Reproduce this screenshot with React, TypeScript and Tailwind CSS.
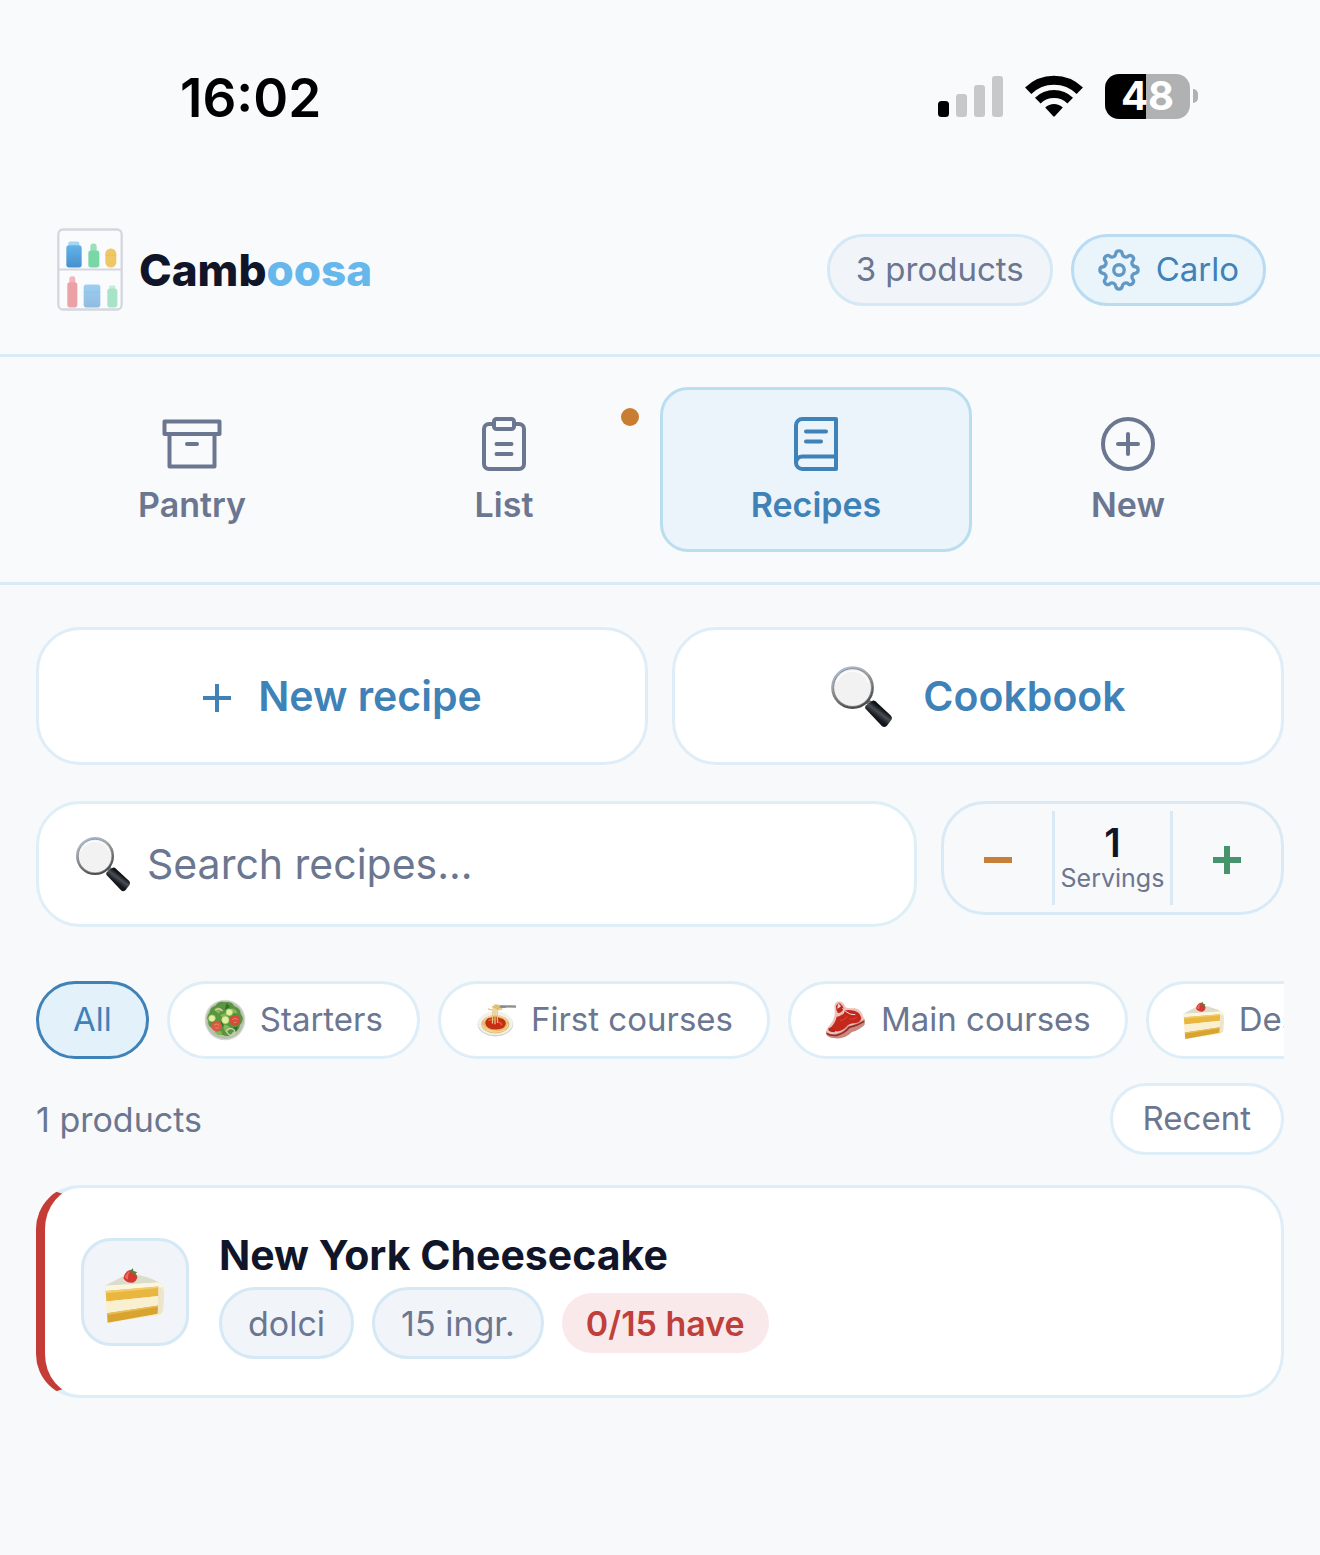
import React, { useState } from "react";

interface IconProps {
  className?: string;
}

interface Tab {
  id: string;
  label: string;
  icon: React.ReactNode;
  alert?: boolean;
}

interface Category {
  id: string;
  label: string;
  icon?: React.ReactNode;
}

const LineIcon: React.FC<{ children: React.ReactNode }> = ({ children }) => (
  <svg
    viewBox="0 0 24 24"
    className="size-[60px]"
    fill="none"
    stroke="currentColor"
    strokeWidth="1.6"
    strokeLinecap="round"
    strokeLinejoin="round"
    aria-hidden="true"
  >
    {children}
  </svg>
);

const GearIcon = () => (
  <svg
    viewBox="0 0 24 24"
    className="size-[42px] opacity-80"
    fill="none"
    stroke="currentColor"
    strokeWidth="1.9"
    strokeLinejoin="round"
    aria-hidden="true"
  >
    <circle cx="12" cy="12" r="3" />
    <path d="M10.15 2.68a1.87 1.87 0 0 1 3.7 0A2.1 2.1 0 0 0 17.28 4.1A1.87 1.87 0 0 1 19.9 6.72A2.1 2.1 0 0 0 21.32 10.15A1.87 1.87 0 0 1 21.32 13.85A2.1 2.1 0 0 0 19.9 17.28A1.87 1.87 0 0 1 17.28 19.9A2.1 2.1 0 0 0 13.85 21.32A1.87 1.87 0 0 1 10.15 21.32A2.1 2.1 0 0 0 6.72 19.9A1.87 1.87 0 0 1 4.1 17.28A2.1 2.1 0 0 0 2.68 13.85A1.87 1.87 0 0 1 2.68 10.15A2.1 2.1 0 0 0 4.1 6.72A1.87 1.87 0 0 1 6.72 4.1A2.1 2.1 0 0 0 10.15 2.68z" />
  </svg>
);

const SignalIcon = () => (
  <svg viewBox="0 0 65 41" className="h-[41px] w-[65px]" aria-hidden="true">
    <rect x="0" y="25" width="11" height="16" rx="3.5" fill="#000" />
    <rect x="18" y="18" width="11" height="23" rx="3" fill="#c7c8ca" />
    <rect x="36" y="9" width="11" height="32" rx="3" fill="#c7c8ca" />
    <rect x="54" y="0" width="11" height="41" rx="3" fill="#c7c8ca" />
  </svg>
);

const WifiIcon = () => (
  <svg viewBox="0 0 58 42" className="h-[42px] w-[58px]" aria-hidden="true">
    <g fill="none" stroke="#000">
      <path d="M3.2 15.8a37 37 0 0 1 51.6 0" strokeWidth="9" />
      <path d="M12.8 25.6a23.2 23.2 0 0 1 32.4 0" strokeWidth="8" />
    </g>
    <path d="M20.2 32.6a12.8 12.8 0 0 1 17.6 0l-7.8 8.3q-1 1-2 0z" />
  </svg>
);

const ShelfLogo = () => (
  <svg viewBox="50 56 198 248" className="h-[83px] w-[66px]" aria-hidden="true">
    <defs>
      <linearGradient id="jar" x1="0" y1="0" x2="0" y2="1">
        <stop offset="0" stopColor="#63b3e8" />
        <stop offset="1" stopColor="#4590cd" />
      </linearGradient>
      <linearGradient id="box" x1="0" y1="0" x2="0" y2="1">
        <stop offset="0" stopColor="#9dcff2" />
        <stop offset="1" stopColor="#8fbbdf" />
      </linearGradient>
    </defs>
    <rect x="54" y="60" width="190" height="240" rx="14" fill="#fafbfd" stroke="#d5d7df" strokeWidth="7" />
    <path d="M54 180h190" stroke="#d5d7df" strokeWidth="6" />
    <rect x="84" y="96" width="33" height="16" rx="5" fill="#a3d5f5" />
    <rect x="78" y="107" width="46" height="67" rx="8" fill="url(#jar)" />
    <rect x="150" y="102" width="19" height="26" rx="9" fill="#98dfba" />
    <rect x="144" y="123" width="33" height="51" rx="8" fill="#79d6a5" />
    <rect x="195" y="117" width="33" height="57" rx="16" fill="#eec866" />
    <path d="M195 137h33" stroke="#e8bd56" strokeWidth="2" />
    <rect x="87" y="200" width="18" height="25" rx="8" fill="#f0b6b9" />
    <rect x="81" y="218" width="30" height="76" rx="8" fill="#eba1a5" />
    <rect x="130" y="225" width="50" height="69" rx="8" fill="url(#box)" />
    <path d="M130 248h50" stroke="#8cc0e8" strokeWidth="2" />
    <rect x="207" y="228" width="18" height="14" rx="3" fill="#c5ecd8" />
    <rect x="201" y="237" width="30" height="57" rx="8" fill="#a8e2c7" />
  </svg>
);

const Magnifier: React.FC<IconProps> = ({ className }) => (
  <svg viewBox="92 132 190 190" className={className} aria-hidden="true">
    <defs>
      <linearGradient id="rim" x1="0" y1="0" x2="0.4" y2="1">
        <stop offset="0" stopColor="#a9c4f2" />
        <stop offset="0.4" stopColor="#a5a6a8" />
        <stop offset="1" stopColor="#4c4d4f" />
      </linearGradient>
      <linearGradient id="grip" x1="0.2" y1="0.9" x2="0.8" y2="0.1">
        <stop offset="0" stopColor="#090a0d" />
        <stop offset="0.35" stopColor="#16181d" />
        <stop offset="0.55" stopColor="#4a5058" />
        <stop offset="0.72" stopColor="#111317" />
        <stop offset="1" stopColor="#050608" />
      </linearGradient>
    </defs>
    <path d="M200 236l14 14" stroke="#7a7b7d" strokeWidth="15" />
    <path d="M199 264q-3-5 1-10l17-13q7-4 12 0l47 44q5 6 1 13l-14 18q-7 6-14 1z" fill="url(#grip)" />
    <circle cx="160" cy="200" r="61" fill="#f2f2f3" stroke="url(#rim)" strokeWidth="7" />
    <circle cx="160" cy="200" r="57" fill="none" stroke="#5d5f64" strokeWidth="2" />
    <path d="M112 184a51 51 0 0 1 96 0" fill="none" stroke="#fff" strokeWidth="4" opacity="0.8" />
  </svg>
);

const Cake: React.FC<IconProps> = ({ className }) => (
  <svg viewBox="250 288 186 176" className={className} aria-hidden="true">
    <path d="M252 348l72-37q60 8 94 27 15 9 14 30l-4 58q-3 9-18 12l-150 22z" fill="#f7edc9" />
    <path d="M252 348l72-37q60 8 92 27z" fill="#dcdccd" />
    <path d="M253 348l158-10q14 2 16 14l-12 2-160 10z" fill="#fbf6df" />
    <path d="M254 364l160-14 1 29-159 17z" fill="#e9b73f" />
    <path d="M254 364l160-14v5l-159 16z" fill="#f3cd6b" />
    <path d="M256 396l159-17-1 29-156 23z" fill="#f9f0d2" />
    <path d="M258 431l156-23-2 25-152 27z" fill="#d9a32f" />
    <path d="M258 431l156-23v4l-155 25z" fill="#e8bd58" />
    <path d="M414 352q17 2 17 20l-4 54q-3 8-15 8z" fill="#ece5cb" />
    <path d="M308 325q3-20 20-25 18 2 22 22-3 15-16 17-19 0-26-14z" fill="#d73732" />
    <path d="M312 323q5-17 17-20-9 11-7 27z" fill="#ee6a58" />
    <path d="M324 305l13-10 1 8 13 4-7 3 5 12-13-13z" fill="#5f7d3b" />
  </svg>
);

const Salad: React.FC<IconProps> = ({ className }) => (
  <svg viewBox="550 118 126 126" className={className} aria-hidden="true">
    <circle cx="613" cy="181" r="61" fill="#d3d7d5" />
    <circle cx="613" cy="181" r="57" fill="#b7c1ab" />
    <path
      d="M566 160q2-18 18-22 12-17 29-10 20-4 28 12 18 6 19 22 14 18-2 34-3 20-21 20-12 20-30 10-22 2-25-18-22-6-19-24-8-13 3-24z"
      fill="#5a9440"
    />
    <path
      d="M580 150q12-13 24 0l-10 12zM632 146q16 2 18 15l-18-2zM606 196q16-4 24 10l-16 12zM582 216q8 12 22 10l-2-12zM598 166l16-6 8 12-12 6z"
      fill="#82b955"
    />
    <path
      d="M570 172l18 14-10 12zM618 130l10 12-16 8zM634 206l18-6-6 18zM604 180l-8 14 14 8z"
      fill="#356f27"
    />
    <path d="M584 152q10-10 22 2" fill="none" stroke="#dbcba8" strokeWidth="4" />
    <path d="M617 213q12-12 24-2 6 12-8 16-12 0-16-14z" fill="none" stroke="#c8d3a4" strokeWidth="4" />
    <circle cx="588" cy="199" r="16" fill="#d95a42" />
    <circle cx="643" cy="182" r="16" fill="#d64c3a" />
    <path d="M580 197q8-8 16 0m-12 8h10M635 180q8-8 16 0m-12 8h9" stroke="#f2a27c" strokeWidth="2" fill="none" />
    <g fill="#e2f0a6" stroke="#a5cc5e" strokeWidth="2">
      <circle cx="574" cy="176" r="10" />
      <circle cx="626" cy="158" r="10" />
      <circle cx="614" cy="181" r="11" />
    </g>
  </svg>
);

const Spaghetti: React.FC<IconProps> = ({ className }) => (
  <svg viewBox="1371 117 128 128" className={className} aria-hidden="true">
    <ellipse cx="1433" cy="194" rx="54" ry="37" fill="#cfcfcd" />
    <ellipse cx="1433" cy="191" rx="53" ry="36" fill="#f3f1ec" />
    <ellipse cx="1433" cy="194" rx="43" ry="28" fill="#e3bd72" />
    <path
      d="M1394 196q6 20 38 22 36-2 40-24M1398 184q10-16 34-16 26 0 38 18M1402 204q12 12 32 10"
      fill="none"
      stroke="#f4dda0"
      strokeWidth="3"
    />
    <path d="M1402 190q2-16 18-16 14-8 28 2 16 2 17 16-2 18-30 18-30 0-33-20z" fill="#c72d12" />
    <path d="M1412 184q8-7 18-4M1444 188q8 2 8 10" fill="none" stroke="#ea5a2e" strokeWidth="5" />
    <path
      d="M1424 192l2-42q-8 0-16-3M1432 194v-46M1440 190l-2-40q8 0 16-2"
      fill="none"
      stroke="#e6c47a"
      strokeWidth="4"
    />
    <path d="M1422 142q10-11 22-8l12 12q-10 7-22 5-8-1-12-9z" fill="#e9d08c" />
    <path d="M1424 138l20 10M1430 134l18 10" stroke="#c39a48" strokeWidth="2" />
    <path d="M1446 136l50-1v9l-28-1q-12 4-22-1z" fill="#8c8c8f" />
    <path d="M1450 137l46-1v3z" fill="#c7c7ca" />
  </svg>
);

const Steak: React.FC<IconProps> = ({ className }) => (
  <svg viewBox="145 119 126 126" className={className} aria-hidden="true">
    <path
      d="M173 141q2-15 16-15 12 2 18 18 8 4 26 2 20 4 26 24 8 18 2 28-18 12-36 18-20 20-44 20-28 2-33-16 0-12 14-26 16-18 11-53z"
      fill="#ecc3bb"
    />
    <path
      d="M148 214q2 9 18 10 28 2 48-24 32-8 50-22v18q-16 16-38 22-22 22-50 19-26-2-28-15z"
      fill="#c98983"
    />
    <path d="M150 222q12 8 30 6 24-6 38-24 26-6 45-18" fill="none" stroke="#9c2a22" strokeWidth="5" />
    <path d="M178 140q4-9 12-8 8 6 12 18-12 14-19 10-5-6-5-20z" fill="#c2271d" />
    <path d="M184 134q8 0 8 8l-10 6z" fill="#f3d9d3" />
    <path
      d="M180 172q16-2 24-18 10-4 28 0 18 4 22 22-2 14-20 16-18 0-26 12-14 14-30 12-14-4-18-10 16-14 20-34z"
      fill="#c4271c"
    />
    <path d="M198 146q8 12-2 20M206 156q16 12 30 10" fill="none" stroke="#f6dcd6" strokeWidth="3" />
    <path d="M190 184q14-2 22-12M218 178q14 4 22-4" fill="none" stroke="#d83d30" strokeWidth="4" />
    <path d="M156 206q12-2 18 6t-8 6-10-12z" fill="#b3261d" />
  </svg>
);

const TABS: Tab[] = [
  {
    id: "pantry",
    label: "Pantry",
    icon: (
      <LineIcon>
        <path d="M21 8v13H3V8" />
        <rect x="1" y="3" width="22" height="5" />
        <path d="M10 12h4" />
      </LineIcon>
    ),
  },
  {
    id: "list",
    label: "List",
    alert: true,
    icon: (
      <LineIcon>
        <path d="M16 4h2a2 2 0 0 1 2 2v14a2 2 0 0 1-2 2H6a2 2 0 0 1-2-2V6a2 2 0 0 1 2-2h2" />
        <rect x="8" y="2" width="8" height="4" rx="1" />
        <path d="M9 12h6M9 16h6" />
      </LineIcon>
    ),
  },
  {
    id: "recipes",
    label: "Recipes",
    icon: (
      <LineIcon>
        <path d="M4 19.5A2.5 2.5 0 0 1 6.5 17H20" />
        <path d="M6.5 2H20v20H6.5A2.5 2.5 0 0 1 4 19.5v-15A2.5 2.5 0 0 1 6.5 2z" />
        <path d="M8 7h8M8 11h6" />
      </LineIcon>
    ),
  },
  {
    id: "new",
    label: "New",
    icon: (
      <LineIcon>
        <circle cx="12" cy="12" r="10" />
        <path d="M12 8v8M8 12h8" />
      </LineIcon>
    ),
  },
];

const CATEGORIES: Category[] = [
  { id: "all", label: "All" },
  { id: "starters", label: "Starters", icon: <Salad className="size-[42px]" /> },
  { id: "first", label: "First courses", icon: <Spaghetti className="size-[42px]" /> },
  { id: "main", label: "Main courses", icon: <Steak className="size-[42px]" /> },
  { id: "desserts", label: "Desserts", icon: <Cake className="size-[42px]" /> },
];

const StatusBar = () => (
  <div className="flex items-center justify-between pt-[67px] pr-[122px] pl-[180px]">
    <span className="text-[53px] leading-[62px] font-semibold text-black">16:02</span>
    <div className="flex items-center gap-[22px] pb-1">
      <SignalIcon />
      <WifiIcon />
      <div className="flex items-center gap-[3px]">
        <span className="flex h-[45px] w-[85px] items-center justify-center rounded-[14px] bg-linear-to-r from-black from-48% to-[#b0b1b3] to-48% text-[40px] leading-none font-bold text-white">
          48
        </span>
        <span className="h-[14px] w-[5px] rounded-r-full bg-[#b0b1b3]" />
      </div>
    </div>
  </div>
);

const Header = () => (
  <header className="flex items-center justify-between border-b-3 border-[#d9ebf7] px-[54px] pt-[99px] pb-[43px]">
    <div className="flex items-center gap-4 pl-[3px]">
      <ShelfLogo />
      <h1 className="text-[44px] leading-[54px] font-extrabold text-[#10152a]">
        Camb<span className="text-[#66b8ec]">oosa</span>
      </h1>
    </div>
    <div className="flex items-center gap-[18px]">
      <span className="flex h-[72px] items-center rounded-full border-3 border-[#d5e8f5] bg-[#f1f4f9] px-[26px] text-[33px]">
        3 products
      </span>
      <button
        type="button"
        className="flex h-[72px] items-center gap-4 rounded-full border-3 border-[#b9dcf2] bg-[#eaf4fb] px-6 text-[33px] text-[#3f82b8]"
      >
        <GearIcon />
        Carlo
      </button>
    </div>
  </header>
);

const App: React.FC = () => {
  const [tab, setTab] = useState("recipes");
  const [category, setCategory] = useState("all");
  const [servings, setServings] = useState(1);
  const [query, setQuery] = useState("");

  return (
    <div className="min-h-screen bg-[#f8f9fb] font-['Inter','Liberation_Sans',sans-serif] text-[#6b7690]">
      <div className="bg-[#f9fafc]">
        <StatusBar />
        <Header />
        <nav className="grid grid-cols-4 border-b-3 border-[#d9ebf7] px-9 py-[30px]">
          {TABS.map((t) => (
            <button
              key={t.id}
              type="button"
              onClick={() => setTab(t.id)}
              className={`relative flex h-[165px] flex-col items-center justify-center gap-[10px] rounded-[28px] border-3 text-[34px] leading-[42px] font-semibold ${
                tab === t.id
                  ? "border-[#b9def0] bg-[#ebf4fb] text-[#3f82b8]"
                  : "border-transparent"
              }`}
            >
              {t.icon}
              {t.label}
              {t.alert && (
                <span className="absolute top-[18px] right-[18px] size-[18px] rounded-full bg-[#c97d30]" />
              )}
            </button>
          ))}
        </nav>
      </div>

      <main className="px-9 pt-[42px] pb-9">
        <div className="grid grid-cols-2 gap-6 text-[41px] leading-[52px] font-semibold text-[#3f82b8]">
          <button
            type="button"
            className="flex h-[138px] items-center justify-center gap-[26px] rounded-[44px] border-3 border-[#deedf7] bg-white"
          >
            <svg viewBox="0 0 30 30" className="mt-1 size-[30px]" aria-hidden="true">
              <path d="M15 1v28M1 15h28" stroke="currentColor" strokeWidth="4" />
            </svg>
            New recipe
          </button>
          <button
            type="button"
            className="flex h-[138px] items-center justify-center gap-[30px] rounded-[44px] border-3 border-[#deedf7] bg-white"
          >
            <Magnifier className="size-[63px]" />
            Cookbook
          </button>
        </div>

        <div className="mt-9 flex items-start gap-6">
          <label className="flex h-[126px] min-w-0 flex-1 items-center gap-4 rounded-[44px] border-3 border-[#deeff7] bg-white px-9">
            <Magnifier className="size-[56px] shrink-0" />
            <input
              type="text"
              aria-label="Search recipes"
              value={query}
              onChange={(e) => setQuery(e.target.value)}
              placeholder="Search recipes..."
              className="min-w-0 flex-1 bg-transparent text-[41px] leading-[52px] outline-none placeholder:text-[#6b7690]"
            />
          </label>
          <div className="flex h-[114px] items-stretch rounded-[44px] border-3 border-[#d9eaf6] py-[7px]">
            <button
              type="button"
              aria-label="Fewer servings"
              onClick={() => setServings(Math.max(1, servings - 1))}
              className="flex w-[108px] items-center justify-center pt-1 text-[#c6803a]"
            >
              <svg viewBox="0 0 28 28" className="size-[28px]" aria-hidden="true">
                <path d="M0 14h28" stroke="currentColor" strokeWidth="6" />
              </svg>
            </button>
            <div className="flex w-[121px] flex-col items-center justify-center border-x-3 border-[#d9eaf6]">
              <span className="text-[39px] leading-[40px] font-semibold text-[#10152a]">{servings}</span>
              <span className="text-[25px] leading-[30px]">Servings</span>
            </div>
            <button
              type="button"
              aria-label="More servings"
              onClick={() => setServings(servings + 1)}
              className="flex w-[108px] items-center justify-center pt-1 text-[#46946c]"
            >
              <svg viewBox="0 0 28 28" className="size-[28px]" aria-hidden="true">
                <path d="M14 0v28M0 14h28" stroke="currentColor" strokeWidth="6" />
              </svg>
            </button>
          </div>
        </div>

        <div className="mt-[54px] flex gap-[18px] overflow-x-auto [scrollbar-width:none]">
          {CATEGORIES.map((c) => (
            <button
              key={c.id}
              type="button"
              onClick={() => setCategory(c.id)}
              className={`flex h-[78px] shrink-0 items-center gap-[14px] rounded-full border-3 px-[34px] text-[33px] ${
                category === c.id
                  ? "border-[#3f82b8] bg-[#e3f1fb] text-[#3f82b8]"
                  : "border-[#deeef8] bg-white"
              }`}
            >
              {c.icon}
              {c.label}
            </button>
          ))}
        </div>

        <div className="mt-6 flex items-center justify-between text-[33px]">
          <span className="text-[34px]">1 products</span>
          <button
            type="button"
            className="h-[72px] rounded-full border-3 border-[#deeef8] bg-white px-[30px]"
          >
            Recent
          </button>
        </div>

        <article className="mt-[30px] flex items-center gap-[30px] rounded-[44px] border-3 border-l-9 border-[#deeef8] border-l-[#c43c35] bg-white px-9 py-9">
          <div className="flex size-[108px] items-center justify-center rounded-[30px] border-3 border-[#d5e8f5] bg-[#f1f4f9] pt-[6px]">
            <Cake className="h-[58px] w-[62px]" />
          </div>
          <div>
            <h2 className="text-[41px] leading-[63px] font-bold text-[#10152a]">New York Cheesecake</h2>
            <div className="flex items-center gap-[18px] text-[34px]">
              <span className="flex h-[72px] items-center rounded-full border-3 border-[#d5e8f5] bg-[#f1f4f9] px-[26px]">
                dolci
              </span>
              <span className="flex h-[72px] items-center rounded-full border-3 border-[#d5e8f5] bg-[#f1f4f9] px-[26px]">
                15 ingr.
              </span>
              <span className="flex h-[60px] items-center rounded-full bg-[#fae9ea] px-6 font-semibold text-[#bf3f3a]">
                0/15 have
              </span>
            </div>
          </div>
        </article>
      </main>
    </div>
  );
};

export default App;
